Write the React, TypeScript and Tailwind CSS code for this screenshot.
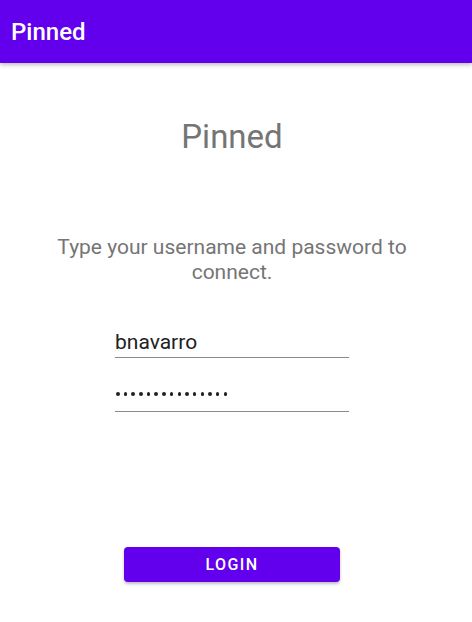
export default function App() {
  const dots = Array.from({ length: 15 });
  return (
    <div
      className="flex h-[622px] w-[472px] flex-col bg-white"
      style={{ fontFamily: 'Roboto, "Noto Sans", sans-serif' }}
    >
      <header className="relative z-10 flex h-[63px] shrink-0 items-center bg-[#6200ee] px-[11px] shadow-[0_2px_4px_rgba(0,0,0,0.25)]">
        <h1 className="text-[24px] font-medium leading-none text-white">Pinned</h1>
      </header>

      <main className="flex flex-col items-center pr-[8px]">
        <h2 className="mt-[55px] text-[33px] leading-[38px] text-[#757575]">Pinned</h2>

        <p className="mt-[79px] w-[380px] text-center text-[21px] leading-[25px] text-[#757575]">
          Type your username and password to connect.
        </p>

        <div className="mt-[45px] w-[234px] border-b border-[#8a8a8a] pb-[2px]">
          <div className="text-[21px] leading-[25px] text-[#212121]">bnavarro</div>
        </div>

        <div className="mt-[28px] flex h-[26px] w-[234px] items-start border-b border-[#8a8a8a] pt-[6px]">
          <div className="flex gap-[4.2px] pl-[1px]">
            {dots.map((_, i) => (
              <span key={i} className="block h-[3.5px] w-[3.5px] rounded-full bg-[#212121]" />
            ))}
          </div>
        </div>

        <button className="mt-[135px] h-[35px] w-[216px] rounded-[4px] bg-[#6200ee] text-[16px] font-medium tracking-[0.09em] text-white shadow-[0_2px_3px_rgba(0,0,0,0.25)]">
          LOGIN
        </button>
      </main>
    </div>
  );
}
